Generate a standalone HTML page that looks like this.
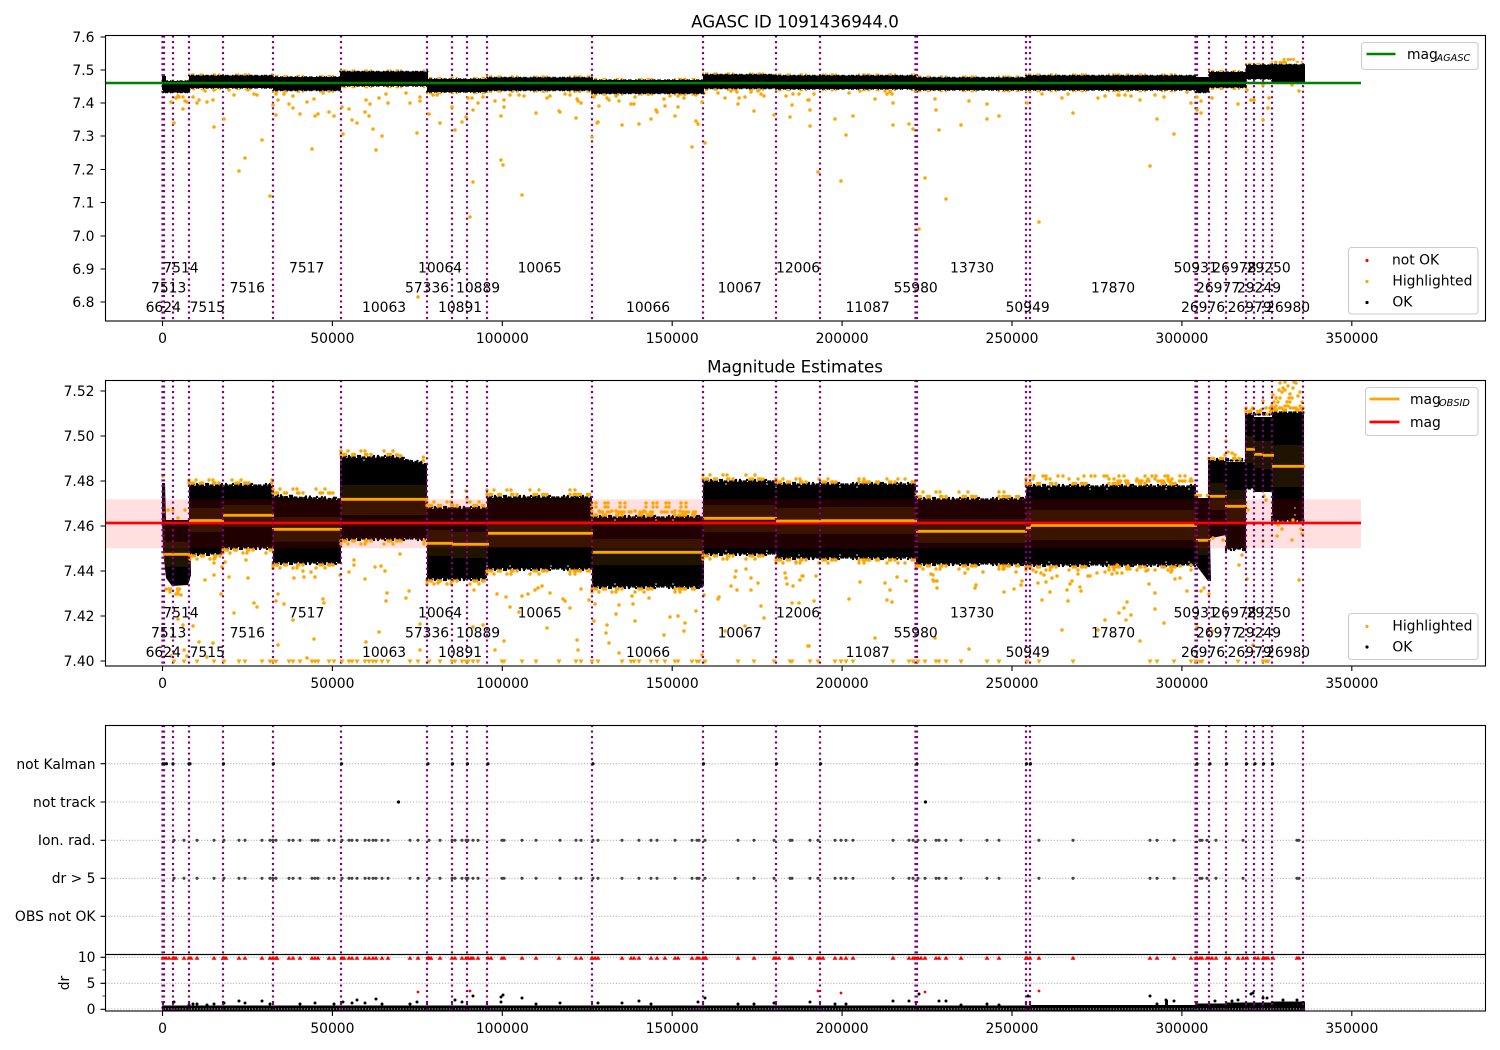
<!DOCTYPE html>
<html><head><meta charset="utf-8"><title>AGASC ID 1091436944.0</title>
<style>
html,body{margin:0;padding:0;background:#fff}
svg{display:block}
text{font-family:"DejaVu Sans","Liberation Sans",sans-serif;font-size:13.89px;fill:#000}
.t{font-size:16.67px;text-anchor:middle}
.m{text-anchor:middle}
.r{text-anchor:end}
.s{font-size:9.72px;font-style:italic}
.d{fill:none;stroke-linecap:round;stroke-linejoin:round}
.o{stroke:#ffa500;stroke-width:3.5}
.sp{stroke:#000;stroke-width:1.1;fill:none}
.tk{stroke:#000;stroke-width:1.1;fill:none}
.g{stroke:#b0b0b0;stroke-width:1.1;stroke-dasharray:1.1 1.8;fill:none}
.pl{fill:none;stroke:#800080;stroke-width:2.2;stroke-dasharray:2.08 3.44}
.leg{fill:#fff;fill-opacity:.8;stroke:#ccc;stroke-width:1.1}
</style></head><body>
<svg xmlns="http://www.w3.org/2000/svg" width="1500" height="1050" viewBox="0 0 1500 1050">
<defs>
<path id="pl" d="M162.5 0V286M164 0V286M173 0V286M189 0V286M223 0V286M273 0V286M341 0V286M427 0V286M452 0V286M467 0V286M487 0V286M592 0V286M703 0V286M776 0V286M820 0V286M915.5 0V286M917 0V286M1026 0V286M1030 0V286M1195.5 0V286M1197 0V286M1209 0V286M1226 0V286M1246 0V286M1254 0V286M1263 0V286M1272 0V286M1303 0V286"/>
<path id="xs" d="M174 0h0M184 0h0M197 0h0M214 0h0M224 0h0M239 0h0M245 0h0M262 0h0M270 0h0M273 0h0M276 0h0M289 0h0M293 0h0M300 0h0M312 0h0M315 0h0M318 0h0M329 0h0M334 0h0M342 0h0M349 0h0M352 0h0M357 0h0M365 0h0M369 0h0M373 0h0M376 0h0M382 0h0M388 0h0M410 0h0M418 0h0M429 0h0M440 0h0M452 0h0M455 0h0M462 0h0M466 0h0M468 0h0M473 0h0M478 0h0M502 0h0M504 0h0M522 0h0M536 0h0M560 0h0M576 0h0M581 0h0M593 0h0M598 0h0M622 0h0M639 0h0M651 0h0M657 0h0M675 0h0M692 0h0M697 0h0M699 0h0M705 0h0M738 0h0M754 0h0M774 0h0M790 0h0M792 0h0M810 0h0M818 0h0M835 0h0M841 0h0M846 0h0M853 0h0M893 0h0M909 0h0M913 0h0M918 0h0M925 0h0M936 0h0M939 0h0M946 0h0M961 0h0M987 0h0M999 0h0M1039 0h0M1073 0h0M1150 0h0M1157 0h0M1174 0h0M1200 0h0M1202 0h0M1207 0h0M1216 0h0M1243 0h0M1297 0h0M1299 0h0"/>
<path id="tri" d="M171 0h5l-2.5 4.5zM181 0h5l-2.5 4.5zM194 0h5l-2.5 4.5zM211 0h5l-2.5 4.5zM221 0h5l-2.5 4.5zM236 0h5l-2.5 4.5zM242 0h5l-2.5 4.5zM259 0h5l-2.5 4.5zM267 0h5l-2.5 4.5zM270 0h5l-2.5 4.5zM273 0h5l-2.5 4.5zM286 0h5l-2.5 4.5zM290 0h5l-2.5 4.5zM297 0h5l-2.5 4.5zM309 0h5l-2.5 4.5zM312 0h5l-2.5 4.5zM315 0h5l-2.5 4.5zM326 0h5l-2.5 4.5zM331 0h5l-2.5 4.5zM339 0h5l-2.5 4.5zM346 0h5l-2.5 4.5zM349 0h5l-2.5 4.5zM354 0h5l-2.5 4.5zM362 0h5l-2.5 4.5zM366 0h5l-2.5 4.5zM370 0h5l-2.5 4.5zM373 0h5l-2.5 4.5zM379 0h5l-2.5 4.5zM385 0h5l-2.5 4.5zM407 0h5l-2.5 4.5zM415 0h5l-2.5 4.5zM426 0h5l-2.5 4.5zM437 0h5l-2.5 4.5zM449 0h5l-2.5 4.5zM452 0h5l-2.5 4.5zM459 0h5l-2.5 4.5zM463 0h5l-2.5 4.5zM465 0h5l-2.5 4.5zM470 0h5l-2.5 4.5zM475 0h5l-2.5 4.5zM499 0h5l-2.5 4.5zM501 0h5l-2.5 4.5zM519 0h5l-2.5 4.5zM533 0h5l-2.5 4.5zM556 0h5l-2.5 4.5zM573 0h5l-2.5 4.5zM578 0h5l-2.5 4.5zM589 0h5l-2.5 4.5zM595 0h5l-2.5 4.5zM619 0h5l-2.5 4.5zM628 0h5l-2.5 4.5zM631 0h5l-2.5 4.5zM636 0h5l-2.5 4.5zM648 0h5l-2.5 4.5zM654 0h5l-2.5 4.5zM662 0h5l-2.5 4.5zM672 0h5l-2.5 4.5zM675 0h5l-2.5 4.5zM689 0h5l-2.5 4.5zM694 0h5l-2.5 4.5zM696 0h5l-2.5 4.5zM702 0h5l-2.5 4.5zM735 0h5l-2.5 4.5zM751 0h5l-2.5 4.5zM771 0h5l-2.5 4.5zM787 0h5l-2.5 4.5zM789 0h5l-2.5 4.5zM807 0h5l-2.5 4.5zM815 0h5l-2.5 4.5zM832 0h5l-2.5 4.5zM838 0h5l-2.5 4.5zM843 0h5l-2.5 4.5zM850 0h5l-2.5 4.5zM890 0h5l-2.5 4.5zM906 0h5l-2.5 4.5zM910 0h5l-2.5 4.5zM915 0h5l-2.5 4.5zM922 0h5l-2.5 4.5zM933 0h5l-2.5 4.5zM936 0h5l-2.5 4.5zM943 0h5l-2.5 4.5zM958 0h5l-2.5 4.5zM984 0h5l-2.5 4.5zM996 0h5l-2.5 4.5zM1024 0h5l-2.5 4.5zM1036 0h5l-2.5 4.5zM1070 0h5l-2.5 4.5zM1147 0h5l-2.5 4.5zM1154 0h5l-2.5 4.5zM1171 0h5l-2.5 4.5zM1188 0h5l-2.5 4.5zM1193 0h5l-2.5 4.5zM1197 0h5l-2.5 4.5zM1199 0h5l-2.5 4.5zM1235 0h5l-2.5 4.5zM1260 0h5l-2.5 4.5zM1263 0h5l-2.5 4.5zM1265 0h5l-2.5 4.5z"/>
</defs>

<!-- Titles -->
<text class="t" x="795" y="27.5">AGASC ID 1091436944.0</text>
<text class="t" x="795" y="372.5">Magnitude Estimates</text>

<!-- ===== AXES 1 ===== -->
<use href="#pl" class="pl" transform="translate(0,35.5)"/>
<path class="d o" d="M171 102h0M174 123h0M176 98h0M178 96h0M179 97h0M183 97h0M185 101h0M187 102h0M183 109h0M193 97h0M197 103h0M199 100h0M205 91h0M207 102h0M213 100h0M214 127h0M214 90h0M224 119h0M229 90h0M234 95h0M239 171h0M245 158h0M248 90h0M254 94h0M257 95h0M262 140h0M270 196h0M273 105h0M276 115h0M278 100h0M276 94h0M284 94h0M289 104h0M293 108h0M293 96h0M300 114h0M307 102h0M312 149h0M314 99h0M315 116h0M318 114h0M323 93h0M329 112h0M334 116h0M342 107h0M343 134h0M349 109h0M352 120h0M357 123h0M365 112h0M366 100h0M369 116h0M370 104h0M373 129h0M376 150h0M379 98h0M382 136h0M388 103h0M386 94h0M406 93h0M410 103h0M417 133h0M420 97h0M420 101h0M418 297h0M429 114h0M433 95h0M437 95h0M440 123h0M452 107h0M455 130h0M462 122h0M466 117h0M468 98h0M472 98h0M473 110h0M473 182h0M470 217h0M478 103h0M483 97h0M495 101h0M504 100h0M504 107h0M501 116h0M501 160h0M503 165h0M522 195h0M510 95h0M519 95h0M524 96h0M536 113h0M547 98h0M550 96h0M559 111h0M560 112h0M565 94h0M570 95h0M576 118h0M577 99h0M578 101h0M581 103h0M592 137h0M594 97h0M599 106h0M597 123h0M598 122h0M607 98h0M609 100h0M616 96h0M619 101h0M622 125h0M631 104h0M634 104h0M635 97h0M639 124h0M651 119h0M656 110h0M657 112h0M664 99h0M665 106h0M670 96h0M675 116h0M678 107h0M678 96h0M684 98h0M692 147h0M696 95h0M696 121h0M698 124h0M702 102h0M705 143h0M704 93h0M718 93h0M725 98h0M731 91h0M736 90h0M737 92h0M738 104h0M739 98h0M745 97h0M751 92h0M754 111h0M758 91h0M761 94h0M764 96h0M774 115h0M786 96h0M790 117h0M792 105h0M793 94h0M799 94h0M808 100h0M810 126h0M814 94h0M809 100h0M810 110h0M818 172h0M835 119h0M841 181h0M846 135h0M849 93h0M853 116h0M860 91h0M875 99h0M885 91h0M887 94h0M890 92h0M892 94h0M893 103h0M893 125h0M909 124h0M913 129h0M919 229h0M925 178h0M935 99h0M936 110h0M939 130h0M946 199h0M961 125h0M969 101h0M987 104h0M987 119h0M999 116h0M1027 103h0M1039 222h0M1042 94h0M1062 98h0M1068 94h0M1073 113h0M1098 98h0M1105 96h0M1118 95h0M1119 95h0M1125 95h0M1131 96h0M1140 100h0M1150 166h0M1157 119h0M1164 97h0M1155 95h0M1174 134h0M1187 92h0M1191 103h0M1197 97h0M1197 110h0M1201 113h0M1201 101h0M1212 98h0M1238 104h0M1247 90h0M1251 100h0M1254 100h0M1263 85h0M1263 120h0M1268 108h0M1269 98h0M1292 85h0M1299 91h0"/>
<!-- ax1 fringes -->
<path class="d" stroke="#ffa500" stroke-width="2.2" stroke-dasharray="0 3 0 1.5 0 7 0 2 0 11 0 1.5 0 4 0 17 0 2.5 0 6 0 1.5 0 3 0 23 0 4 0 2" d="M189 74.3H273M273 75.8H341M341 70.3H427M427 77.8H487M487 76.3H592M592 78.8H703M703 73.3H776M776 74.3H916M916 76.3H1026M1026 74.3H1196M1209 70.8H1246M1246 63.8H1272M1272 61.8H1304M190 89.3H273M273 91.8H341M341 87.3H427M427 93.3H487M487 91.8H592M592 94.8H703M703 89.8H776M776 90.3H916M916 91.3H1026M1026 91.3H1196M1209 89H1246"/>
<path class="d" stroke="#ffa500" stroke-width="3" stroke-dasharray="0 4 0 2.5 0 3 0 5" d="M1276 62.5H1290M1284 59.5H1298"/>
<path fill="#000" d="M162 76H166V90H162ZM163 81H190V92.5H163ZM189 75.5H273V88H189ZM273 77H341V90.5H273ZM340 71.5H428V86H340ZM427 79H487V92H427ZM487 77.5H593V90.5H487ZM592 80H704V93.5H592ZM703 74.5H776V88.5H703ZM776 75.5H916V89H776ZM916 77.5H1026V90H916ZM1026 75.5H1196V90H1026ZM1196 77H1209V92.5H1196ZM1209 72H1246V87.5H1209ZM1246 65H1272V79H1246ZM1272 64.5H1305V83H1272Z"/>
<path class="d" stroke="#000" stroke-width="1.8" stroke-dasharray="0 2.6 0 1.7 0 3.4 0 1.9 0 5" d="M163 81H190M189 75.5H273M273 77H341M340 71.5H428M427 79H487M487 77.5H593M592 80H704M703 74.5H776M776 75.5H916M916 77.5H1026M1026 75.5H1196M1209 72H1246M1246 65H1272M1272 64.5H1305M163 92.5H190M189 88H273M273 90.5H341M340 86H428M427 92H487M487 90.5H593M592 93.5H704M703 88.5H776M776 89H916M916 90H1026M1026 90H1196M1196 92.5H1209M1209 87.5H1246M1246 79H1272M1272 83H1305"/>
<path d="M105.5 83H1361" stroke="#008000" stroke-width="2.4" fill="none"/>
<g transform="translate(-.7,-.5)">
<text x="164" y="273">7514</text><text x="289.7" y="273">7517</text><text x="418.7" y="273">10064</text><text x="518.3" y="273">10065</text><text x="776.7" y="273">12006</text><text x="950.7" y="273">13730</text><text x="1174.3" y="273">50931</text><text x="1213" y="273">26978</text><text x="1247.3" y="273">29250</text>
<text x="151.7" y="293">7513</text><text x="230.3" y="293">7516</text><text x="405.7" y="293">57336</text><text x="456.7" y="293">10889</text><text x="718.3" y="293">10067</text><text x="894.3" y="293">55980</text><text x="1091.7" y="293">17870</text><text x="1196.7" y="293">26977</text><text x="1237.7" y="293">29249</text>
<text x="146.3" y="312.5">6624</text><text x="190.3" y="312.5">7515</text><text x="362.7" y="312.5">10063</text><text x="438.7" y="312.5">10891</text><text x="626.7" y="312.5">10066</text><text x="846.3" y="312.5">11087</text><text x="1006.3" y="312.5">50949</text><text x="1181.7" y="312.5">26976</text><text x="1228.3" y="312.5">26979</text><text x="1266.7" y="312.5">26980</text>
</g>
<rect class="sp" x="105.5" y="35.5" width="1380" height="285.5"/>
<path class="tk" d="M162.5 321v5M332.4 321v5M502.3 321v5M672.2 321v5M842.1 321v5M1012 321v5M1181.9 321v5M1351.8 321v5M105.5 37h-5M105.5 70h-5M105.5 103h-5M105.5 136h-5M105.5 169.5h-5M105.5 202.5h-5M105.5 236h-5M105.5 269h-5M105.5 302h-5"/>
<text class="r" x="94.5" y="42">7.6</text><text class="r" x="94.5" y="75">7.5</text><text class="r" x="94.5" y="108">7.4</text><text class="r" x="94.5" y="141">7.3</text><text class="r" x="94.5" y="174.5">7.2</text><text class="r" x="94.5" y="207.5">7.1</text><text class="r" x="94.5" y="241">7.0</text><text class="r" x="94.5" y="274">6.9</text><text class="r" x="94.5" y="307">6.8</text>
<text class="m" x="162.5" y="343">0</text><text class="m" x="332.4" y="343">50000</text><text class="m" x="502.3" y="343">100000</text><text class="m" x="672.2" y="343">150000</text><text class="m" x="842.1" y="343">200000</text><text class="m" x="1012" y="343">250000</text><text class="m" x="1181.9" y="343">300000</text><text class="m" x="1351.8" y="343">350000</text>
<!-- legends ax1 -->
<rect class="leg" x="1361.5" y="42.5" width="116.5" height="27" rx="3"/>
<path d="M1366.5 54H1395.5" stroke="#008000" stroke-width="2.4"/>
<text x="1407" y="59">mag</text><text class="s" x="1436.5" y="61">AGASC</text>
<rect class="leg" x="1348.5" y="247.5" width="129.5" height="66.5" rx="3"/>
<circle cx="1367" cy="260.5" r="1.6" fill="#f00"/><circle cx="1367" cy="281.5" r="1.6" fill="#ffa500"/><circle cx="1367" cy="302.5" r="1.6" fill="#000"/>
<text x="1392" y="264.7">not OK</text><text x="1392.4" y="285.7">Highlighted</text><text x="1392.4" y="306.7">OK</text>

<!-- ===== AXES 2 ===== -->
<!-- black bands -->
<path fill="#000" d="M162 483L165 483L166 520L190 520L191 575L188 585L172 586L166 578L163 550L162 520ZM189 486H223V553H189ZM223 486H273V547H223ZM273 497L341 500V562H273ZM340 458H395L427 465V538H340ZM427 509H487V578H427ZM487 498H592V568H487ZM592 518H704V586H592ZM703 482H776V553H703ZM776 485H916V557H776ZM916 500H1026V563H916ZM1026 487H1196V564H1026ZM1196 498H1209L1211 581H1208L1196 565ZM1208 461H1226V535L1212 538H1208ZM1226 462H1246V548H1226ZM1245 415H1254V488H1245ZM1254 417H1272V492H1254ZM1272 413H1304V520H1272Z"/>
<path class="d" stroke="#000" stroke-width="2.4" stroke-dasharray="0 2.6 0 1.7 0 3.4 0 1.9" d="M189 485.5H273M273 496.5L341 499.5M341 457.5H395L427 464.5M427 508.5H487M487 497.5H592M592 517.5H703M703 481.5H776M776 484.5H916M916 499.5H1026M1026 486.5H1196M1209 460.5H1246M1246 414.5H1272M1272 412.5H1304M190 553.5H223M223 547.5H273M273 562.5H341M341 538.5H427M427 578.5H487M487 568.5H592M592 586.5H703M703 553.5H776M776 557.5H916M916 563.5H1026M1026 564.5H1196M1226 548.5H1246M1272 520.5H1304M1246 488.5H1272"/>
<path class="d" stroke="#000" stroke-width="2.4" stroke-dasharray="0 5 0 3 0 9 0 2 0 14 0 4 0 7" d="M189 484H273M273 495L341 498M341 456H395L427 463M427 507H487M487 496H592M592 516H703M703 480H776M776 483H916M916 498H1026M1026 485H1196M1209 459H1246M1246 413H1272M190 555H223M223 549H273M273 564H341M341 540H427M427 580H487M487 570H592M592 588H703M703 555H776M776 559H916M916 565H1026M1026 566H1196M1226 550H1246M1272 517H1304"/>
<path class="d" stroke="#fff" stroke-width="1.5" stroke-dasharray="0 23 0 41 0 17 0 59" d="M341 460H395M703 484H776M776 487H916M1026 489H1196M592 520H703M487 566H592M592 584H703M703 551H776M776 555H916M1026 562H1196M1272 515H1304M1272 508H1304"/>
<!-- pink span -->
<rect x="105.5" y="499.3" width="1255.5" height="49" fill="#f00" fill-opacity=".125"/>
<!-- orange std bands -->
<path fill="#ffa500" fill-opacity=".12" d="M163 541.7H189V566.7H163ZM189 508H223V532H189ZM223 505H273V527H223ZM273 517H341V541.7H273ZM341 485H427V515H341ZM427 530H452V556H427ZM452 532H487V558H452ZM487 521H592V547H487ZM592 539H703V565H592ZM703 505H776V532H703ZM776 508H820V534H776ZM820 507H916V534H820ZM916 519H1026V543H916ZM1026 510H1196V540H1026ZM1196 525H1209V555H1196ZM1209 483H1226V510H1209ZM1226 490H1246V522H1226ZM1246 436H1254V463H1246ZM1254 441H1263V468H1254ZM1263 441H1272V469H1263ZM1272 445H1304V487H1272Z"/>
<!-- outliers -->
<path class="d o" d="M163 476h0M168 510h0M173 510h0M185 510h0M178 518h0M170 592h0M178 591h0M176 594h0M178 594h0M181 595h0M178 619h0M183 625h0M193 626h0M199 642h0M213 643h0M207 657h0M171 656h0M184 650h0M187 656h0M205 580h0M214 575h0M214 563h0M215 558h0M221 594h0M222 567h0M225 562h0M229 577h0M234 613h0M246 560h0M248 578h0M254 603h0M257 607h0M276 601h0M278 594h0M284 604h0M278 645h0M293 620h0M294 578h0M303 571h0M304 577h0M311 572h0M314 639h0M307 658h0M315 577h0M323 599h0M324 603h0M340 575h0M349 572h0M354 560h0M354 565h0M365 579h0M366 642h0M375 567h0M379 632h0M381 566h0M385 571h0M387 593h0M386 601h0M400 554h0M406 598h0M409 591h0M420 624h0M420 650h0M438 583h0M452 492h0M466 491h0M467 498h0M473 627h0M474 590h0M483 625h0M495 650h0M497 594h0M506 597h0M510 607h0M519 612h0M522 596h0M528 594h0M535 590h0M538 588h0M542 586h0M550 593h0M547 628h0M563 599h0M565 601h0M570 608h0M577 640h0M578 650h0M504 641h0M581 589h0M589 600h0M595 604h0M594 621h0M607 625h0M606 633h0M609 643h0M619 653h0M619 605h0M616 614h0M632 596h0M633 604h0M635 621h0M649 598h0M664 635h0M670 617h0M678 616h0M685 623h0M684 631h0M696 611h0M702 655h0M704 595h0M718 599h0M719 597h0M725 631h0M731 586h0M737 590h0M735 577h0M736 571h0M745 626h0M746 569h0M751 578h0M751 590h0M758 583h0M761 606h0M764 618h0M785 573h0M786 578h0M787 584h0M793 586h0M796 562h0M802 576h0M800 580h0M792 603h0M799 603h0M808 646h0M803 576h0M816 576h0M809 646h0M814 601h0M849 599h0M860 582h0M885 583h0M890 590h0M887 600h0M892 602h0M897 577h0M906 581h0M915 591h0M875 638h0M931 574h0M933 575h0M933 580h0M934 581h0M937 581h0M937 588h0M935 638h0M965 573h0M969 649h0M975 588h0M976 585h0M983 572h0M1004 592h0M1003 569h0M1014 589h0M1016 572h0M1021 585h0M1022 581h0M1036 572h0M1038 583h0M1042 600h0M1044 575h0M1041 573h0M1046 582h0M1050 592h0M1052 578h0M1057 576h0M1062 630h0M1067 590h0M1070 584h0M1072 581h0M1068 601h0M1078 574h0M1080 587h0M1081 591h0M1088 576h0M1090 576h0M1097 573h0M1105 572h0M1105 620h0M1098 630h0M1112 574h0M1117 573h0M1119 613h0M1117 565h0M1122 573h0M1127 569h0M1130 569h0M1146 571h0M1149 584h0M1155 593h0M1124 608h0M1127 602h0M1131 615h0M1126 620h0M1140 641h0M1155 609h0M1164 623h0M1171 572h0M1175 579h0M1180 578h0M1180 566h0M1187 591h0M1191 565h0M1197 627h0M1201 591h0M1204 588h0M1209 594h0M1212 631h0M1213 538h0M1223 540h0M1239 565h0M1242 555h0M1247 579h0M1248 510h0M1253 645h0M1263 541h0M1264 496h0M1266 500h0M1277 536h0M1292 540h0M1282 529h0M1278 525h0M1299 580h0M1301 529h0M1302 534h0M1293 520h0M1263 401h0M1261 410h0M1252 409h0M1267 414h0M1226 441h0M1228 452h0M1225 455h0M1232 453h0M1235 455h0M1240 459h0M1280 383h0M1285 382h0M1294 382h0M1296 383h0M1283 388h0M1282 392h0M1285 390h0M1300 392h0M1276 398h0M1290 394h0M1279 390h0M1293 388h0M1298 396h0M1288 386h0M1273 395h0"/>
<!-- fringes -->
<path class="d" stroke="#ffa500" stroke-width="3.4" stroke-dasharray="0 3 0 1.5 0 7 0 2 0 11 0 1.5 0 4 0 17 0 2.5 0 6 0 1.5 0 3 0 23 0 4 0 2" d="M189 483H273M273 493H341M341 454.5H395L427 461.5M427 505.5H487M487 494.5H592M592 515H703M703 479H776M776 482H916M916 496.5H1026M1026 483.5H1196M1196 495.5H1209M1209 458.5H1246M1246 411.5H1272M1272 410H1304M166 589H190M190 556H223M223 550H273M273 565H341M341 541H427M427 581H487M487 571H592M592 589H703M703 556H776M776 560H916M916 566H1026M1026 567H1196"/>
<path class="d" stroke="#ffa500" stroke-width="3.4" stroke-dasharray="0 7 0 13 0 4 0 19 0 9 0 31 0 5 0 23 0 11" d="M189 480H273M273 489H341M341 451H395L427 458M427 502H487M487 490H592M592 511H703M703 475H776M776 479H916M916 492H1026M1026 479H1196M1246 408H1272M190 559H223M223 553H273M273 568H341M341 544H427M427 584H487M487 574H592M592 592H703M703 559H776M776 563H916M916 569H1026M1026 570H1196"/>
<path class="d" stroke="#ffa500" stroke-width="3.4" stroke-dasharray="0 4 0 9 0 3 0 12 0 5 0 21 0 7" d="M592 507H703M592 503H703M1272 406H1304M1274 402H1303M1276 398H1302M1030 476H1196"/>
<path class="d" stroke="#ffa500" stroke-width="3.4" stroke-dasharray="0 2.5 0 5 0 2 0 9 0 3" d="M1272 408H1304M600 512H700M1118 481H1196"/>
<!-- lines -->
<path d="M105.5 523H1361" stroke="#f00" stroke-width="2.78" fill="none"/>
<path stroke="#ffa500" stroke-width="2.78" fill="none" d="M162 513H165M163 554.3H190M189 520.5H224M223 515.3H274M272 529.3H342M341 499.3H428M427 543.3H453M452 544.3H489M488 533.3H593M592 552.3H704M703 518.3H777M776 521H821M820 520.7H917M916 531.3H1027M1026 528H1031M1030 525.5H1197M1196 540.3H1211M1208 496.3H1227M1225 506.3H1247M1246 449.3H1255M1254 454.3H1264M1263 455.3H1274M1272 466.3H1305"/>
<use href="#pl" class="pl" transform="translate(0,380)"/>
<use href="#tri" fill="#ffa500" transform="translate(.5,659.5)"/>
<g transform="translate(-.7,-.7)">
<text x="164" y="618">7514</text><text x="289.7" y="618">7517</text><text x="418.7" y="618">10064</text><text x="518.3" y="618">10065</text><text x="776.7" y="618">12006</text><text x="950.7" y="618">13730</text><text x="1174.3" y="618">50931</text><text x="1213" y="618">26978</text><text x="1247.3" y="618">29250</text>
<text x="151.7" y="638">7513</text><text x="230.3" y="638">7516</text><text x="405.7" y="638">57336</text><text x="456.7" y="638">10889</text><text x="718.3" y="638">10067</text><text x="894.3" y="638">55980</text><text x="1091.7" y="638">17870</text><text x="1196.7" y="638">26977</text><text x="1237.7" y="638">29249</text>
<text x="146.3" y="657.5">6624</text><text x="190.3" y="657.5">7515</text><text x="362.7" y="657.5">10063</text><text x="438.7" y="657.5">10891</text><text x="626.7" y="657.5">10066</text><text x="846.3" y="657.5">11087</text><text x="1006.3" y="657.5">50949</text><text x="1181.7" y="657.5">26976</text><text x="1228.3" y="657.5">26979</text><text x="1266.7" y="657.5">26980</text>
</g>
<rect class="sp" x="105.5" y="380.5" width="1380" height="285.5"/>
<path class="tk" d="M162.5 666v5M332.4 666v5M502.3 666v5M672.2 666v5M842.1 666v5M1012 666v5M1181.9 666v5M1351.8 666v5M105.5 391h-5M105.5 436h-5M105.5 481h-5M105.5 526h-5M105.5 571h-5M105.5 616h-5M105.5 661h-5"/>
<text class="r" x="94.5" y="396">7.52</text><text class="r" x="94.5" y="441">7.50</text><text class="r" x="94.5" y="486">7.48</text><text class="r" x="94.5" y="531">7.46</text><text class="r" x="94.5" y="576">7.44</text><text class="r" x="94.5" y="621">7.42</text><text class="r" x="94.5" y="666">7.40</text>
<text class="m" x="162.5" y="688">0</text><text class="m" x="332.4" y="688">50000</text><text class="m" x="502.3" y="688">100000</text><text class="m" x="672.2" y="688">150000</text><text class="m" x="842.1" y="688">200000</text><text class="m" x="1012" y="688">250000</text><text class="m" x="1181.9" y="688">300000</text><text class="m" x="1351.8" y="688">350000</text>
<!-- legends ax2 -->
<rect class="leg" x="1365.5" y="387.5" width="112.5" height="48" rx="3"/>
<path d="M1369.5 399H1399.5" stroke="#ffa500" stroke-width="2.78"/><path d="M1369.5 422H1399.5" stroke="#f00" stroke-width="2.78"/>
<text x="1410" y="404">mag</text><text class="s" x="1439" y="406">OBSID</text><text x="1410" y="427">mag</text>
<rect class="leg" x="1348.5" y="613.5" width="129.5" height="46" rx="3"/>
<circle cx="1367" cy="626.5" r="1.6" fill="#ffa500"/><circle cx="1367" cy="647" r="1.6" fill="#000"/>
<text x="1392.4" y="630.7">Highlighted</text><text x="1392.4" y="651.7">OK</text>

<!-- ===== AXES 3 ===== -->
<path class="g" d="M105.5 763.7H1485M105.5 802H1485M105.5 840.3H1485M105.5 878.3H1485M105.5 916.3H1485M105.5 957.3H1485M105.5 983.3H1485"/>
<use href="#pl" class="pl" transform="translate(0,725)"/>
<!-- not Kalman dots -->
<path class="d" stroke="#111" stroke-width="3.2" d="M163 763.7h0M165 763.7h0M166.5 763.7h0M173 763.7h0M189 763.7h0M190 763.7h0M223.5 763.7h0M273.5 763.7h0M341.5 763.7h0M428 763.7h0M452.5 763.7h0M467.5 763.7h0M488 763.7h0M593 763.7h0M703.5 763.7h0M776.5 763.7h0M820.5 763.7h0M917 763.7h0M1026.5 763.7h0M1030.5 763.7h0M1197 763.7h0M1210 763.7h0M1226.5 763.7h0M1246.5 763.7h0M1255 763.7h0M1263.5 763.7h0M1272.5 763.7h0"/>
<path class="d" stroke="#000" stroke-width="3.2" d="M398.5 802h0M925.5 802h0"/>
<use href="#xs" class="d" stroke="#444" stroke-width="3.1" transform="translate(0,840.3)"/>
<use href="#xs" class="d" stroke="#444" stroke-width="3.1" transform="translate(0,878.3)"/>
<!-- red triangles -->
<use href="#tri" fill="#f00" transform="translate(.5,959.8) scale(1,-.9)"/>
<path fill="#f00" d="M160.5 959.8h5l-2.5-4zM163.5 959.8h5l-2.5-4zM166.5 959.8h5l-2.5-4zM170.5 959.8h5l-2.5-4zM173.5 959.8h5l-2.5-4zM186.5 959.8h5l-2.5-4zM188.5 959.8h5l-2.5-4zM220.5 959.8h5l-2.5-4zM223.5 959.8h5l-2.5-4zM270.5 959.8h5l-2.5-4zM274.5 959.8h5l-2.5-4zM339.5 959.8h5l-2.5-4zM341.5 959.8h5l-2.5-4zM425.5 959.8h5l-2.5-4zM428.5 959.8h5l-2.5-4zM465.5 959.8h5l-2.5-4zM468.5 959.8h5l-2.5-4zM485.5 959.8h5l-2.5-4zM488.5 959.8h5l-2.5-4zM589.5 959.8h5l-2.5-4zM592.5 959.8h5l-2.5-4zM700.5 959.8h5l-2.5-4zM703.5 959.8h5l-2.5-4zM773.5 959.8h5l-2.5-4zM776.5 959.8h5l-2.5-4zM817.5 959.8h5l-2.5-4zM820.5 959.8h5l-2.5-4zM912.5 959.8h5l-2.5-4zM915.5 959.8h5l-2.5-4zM918.5 959.8h5l-2.5-4zM1023.5 959.8h5l-2.5-4zM1027.5 959.8h5l-2.5-4zM1194.5 959.8h5l-2.5-4zM1204.5 959.8h5l-2.5-4zM1206.5 959.8h5l-2.5-4zM1209.5 959.8h5l-2.5-4zM1213.5 959.8h5l-2.5-4zM1223.5 959.8h5l-2.5-4zM1226.5 959.8h5l-2.5-4zM1240.5 959.8h5l-2.5-4zM1244.5 959.8h5l-2.5-4zM1252.5 959.8h5l-2.5-4zM1255.5 959.8h5l-2.5-4zM1261.5 959.8h5l-2.5-4zM1270.5 959.8h5l-2.5-4zM1294.5 959.8h5l-2.5-4zM1296.5 959.8h5l-2.5-4z"/>
<!-- dr bottom band -->
<path fill="#000" d="M162 1005.5H1030V1011H162ZM1030 1005H1196V1011H1030ZM1196 1003.5H1226V1011H1196ZM1226 1002.5H1272V1011H1226ZM1272 1001.5H1305V1011H1272ZM1165 1000H1168V1006H1165Z"/>
<path class="d" stroke="#000" stroke-width="3" d="M174 1002h0M189 1005h0M193 1004h0M197 1004h0M207 1005h0M214 1004h0M224 1003h0M239 1001h0M245 1003h0M262 1001h0M270 1004h0M300 1004h0M315 1003h0M334 1004h0M343 1002h0M352 1003h0M357 1000h0M365 1003h0M376 999h0M382 1004h0M410 1004h0M417 1002h0M455 1000h0M462 1002h0M473 996h0M501 997h0M503 995h0M501 1002h0M522 998h0M536 1004h0M560 1003h0M598 1003h0M622 1003h0M639 1001h0M651 1004h0M698 1002h0M705 998h0M738 1004h0M754 1004h0M774 1003h0M810 1002h0M835 1004h0M846 1004h0M893 1001h0M909 1001h0M919 994h0M939 1001h0M946 1001h0M961 1005h0M987 1004h0M999 1005h0M1028 996h0M1150 996h0M1157 1004h0M1166 1000h0M1174 1001h0M1238 1000h0M1251 994h0M1253 993h0M1263 998h0M1267 998h0M1232 1001h0M1215 1001h0M1283 1000h0M1297 1000h0"/>
<path class="d" stroke="#f00" stroke-width="2.8" d="M418 992h0M470 991h0M818 991h0M841 993h0M925 992h0M1039 991h0"/>
<path d="M162 1009H1305" stroke="#ddd" stroke-width="1.1" stroke-dasharray="1.1 1.8" fill="none"/>
<path class="g" d="M1305 1009H1485M105.5 1009H162"/>
<path d="M163 1003v7M173 1003v7M189 1003v7M223 1003v7M273 1003v7M341 1003v7M427 1003v7M452 1003v7M467 1003v7M487 1003v7M592 1003v7M703 1003v7M776 1003v7M820 1003v7M916 1003v7M1026 1003v7M1030 1003v7M1196 1003v7M1209 1003v7M1226 1003v7M1246 1003v7M1254 1003v7M1263 1003v7M1272 1003v7M1303 1003v7" stroke="#800080" stroke-width="2.08" stroke-dasharray="2.08 3.44" fill="none"/>
<rect class="sp" x="105.5" y="725.5" width="1380" height="229"/>
<rect class="sp" x="105.5" y="954.5" width="1380" height="56.5"/>
<path class="tk" d="M162.5 1011v5M332.4 1011v5M502.3 1011v5M672.2 1011v5M842.1 1011v5M1012 1011v5M1181.9 1011v5M1351.8 1011v5M105.5 763.7h-5M105.5 802h-5M105.5 840.3h-5M105.5 878.3h-5M105.5 916.3h-5M105.5 957.3h-5M105.5 983.3h-5M105.5 1009.3h-5"/>
<path stroke="#000" stroke-width=".8" fill="none" d="M105.5 970h-3M105.5 996h-3"/>
<text class="r" x="95.5" y="769">not Kalman</text><text class="r" x="95.5" y="807">not track</text><text class="r" x="95.5" y="845">Ion. rad.</text><text class="r" x="95.5" y="883">dr &gt; 5</text><text class="r" x="95.5" y="921">OBS not OK</text>
<text class="r" x="95.5" y="962">10</text><text class="r" x="95.5" y="988">5</text><text class="r" x="95.5" y="1014">0</text>
<text class="m" transform="translate(69,983) rotate(-90)" x="0" y="0">dr</text>
<text class="m" x="162.5" y="1033">0</text><text class="m" x="332.4" y="1033">50000</text><text class="m" x="502.3" y="1033">100000</text><text class="m" x="672.2" y="1033">150000</text><text class="m" x="842.1" y="1033">200000</text><text class="m" x="1012" y="1033">250000</text><text class="m" x="1181.9" y="1033">300000</text><text class="m" x="1351.8" y="1033">350000</text>
</svg>
</body></html>
